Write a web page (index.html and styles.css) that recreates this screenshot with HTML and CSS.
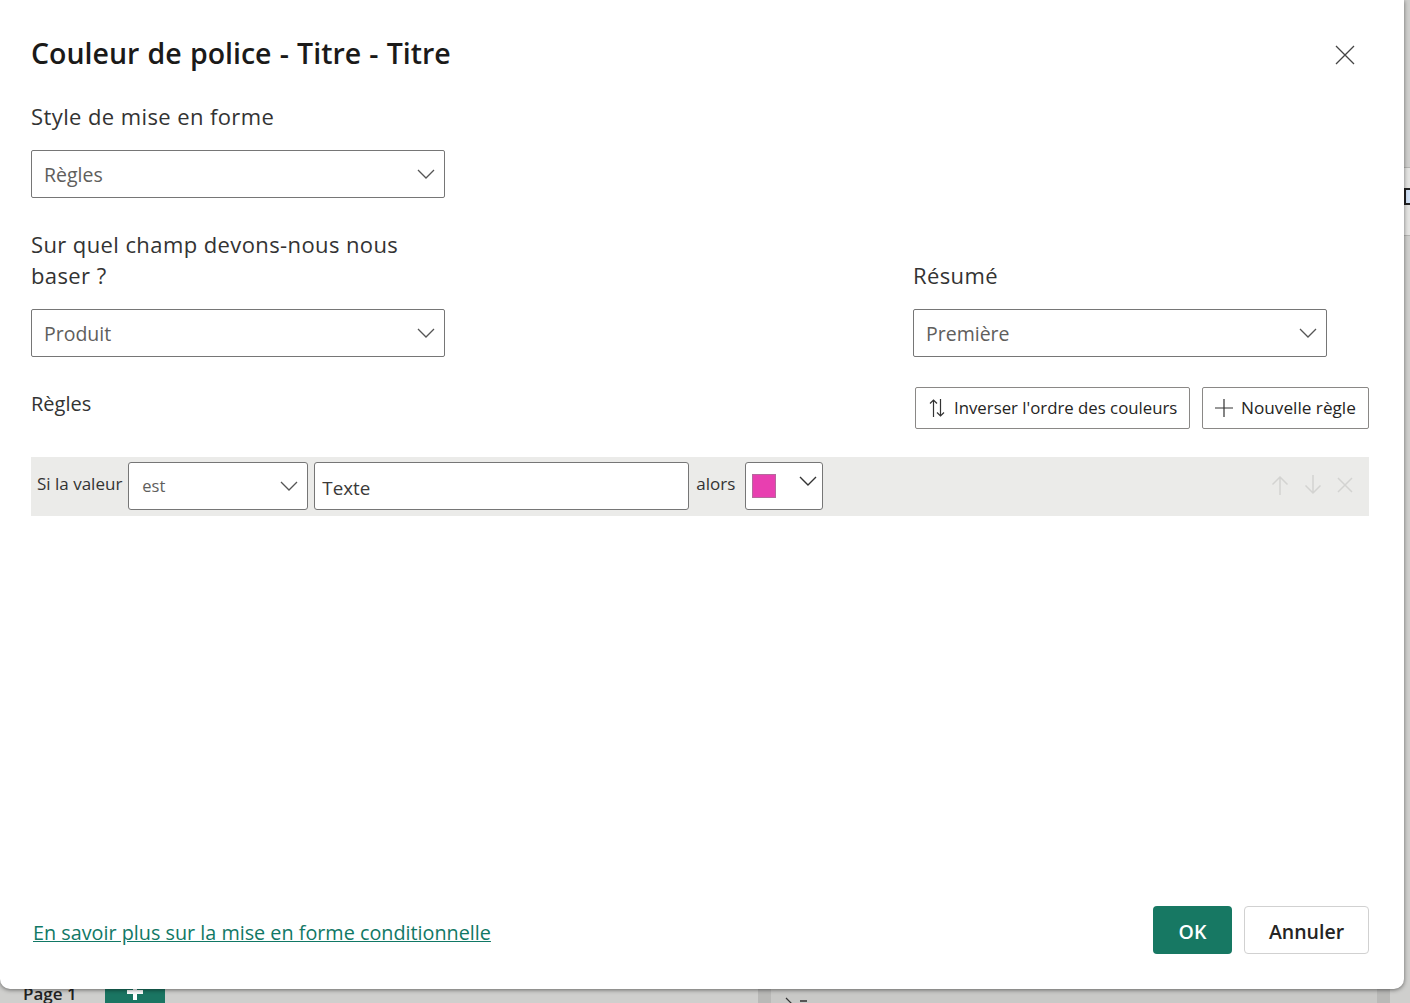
FILE: index.html
```html
<!DOCTYPE html>
<html lang="fr">
<head>
<meta charset="utf-8">
<title>Couleur de police - Titre - Titre</title>
<link rel="stylesheet" href="styles.css">
</head>
<body>
<div class="backdrop">
  <div class="bg-tabs">
    <span class="bg-page">Page 1</span>
    <span class="bg-add"><svg width="16" height="16" viewBox="0 0 16 16"><path d="M8 0v16M0 8h16" stroke="#fff" stroke-width="4"/></svg></span>
  </div>
  <div class="bg-gutter"></div>
  <div class="bg-pane"><svg width="12" height="12" viewBox="0 0 12 12"><path d="M3 1l5 5-5 5" fill="none" stroke="#333" stroke-width="1.2"/></svg><span class="bg-mark"></span></div>
  <div class="bg-pane-end"></div>
  <div class="bg-side"><span class="bg-box"></span></div>
</div>
<main class="modal">
  <header class="modal-head">
    <h1 class="title">Couleur de police - Titre - Titre</h1>
    <svg class="close" width="20" height="20" viewBox="0 0 20 20"><path d="M1 1l18 18M19 1L1 19" stroke="#444" stroke-width="1.3" fill="none"/></svg>
  </header>
  <div class="label first">Style de mise en forme</div>
  <div class="select wide"><span>Règles</span><svg class="chev" width="18" height="10" viewBox="0 0 18 10"><path d="M1 1l8 8 8-8" fill="none" stroke="#555" stroke-width="1.3"/></svg></div>
  <div class="fields">
    <div class="field">
      <div class="label two-line">Sur quel champ devons-nous nous baser ?</div>
      <div class="select wide"><span>Produit</span><svg class="chev" width="18" height="10" viewBox="0 0 18 10"><path d="M1 1l8 8 8-8" fill="none" stroke="#555" stroke-width="1.3"/></svg></div>
    </div>
    <div class="field">
      <div class="label">Résumé</div>
      <div class="select wide"><span>Première</span><svg class="chev" width="18" height="10" viewBox="0 0 18 10"><path d="M1 1l8 8 8-8" fill="none" stroke="#555" stroke-width="1.3"/></svg></div>
    </div>
  </div>
  <div class="rules-head">
    <div class="rules-label">Règles</div>
    <div class="actions">
      <button class="btn-line reverse"><svg class="btn-icon" width="16" height="20" viewBox="0 0 16 20"><path d="M4.500 19V2M1 5.500l3.500-3.500L8 5.500M11.500 1v17M8 14.500l3.500 3.500 3.500-3.500" fill="none" stroke="#333" stroke-width="1.200"/></svg><span class="btn-text">Inverser l'ordre des couleurs</span></button>
      <button class="btn-line add"><svg class="btn-icon" width="18" height="18" viewBox="0 0 18 18"><path d="M9 0v18M0 9h18" stroke="#333" stroke-width="1.200"/></svg><span class="btn-text">Nouvelle règle</span></button>
    </div>
  </div>
  <div class="rule">
    <span class="rule-text">Si la valeur</span>
    <div class="select op"><span>est</span><svg class="chev" width="18" height="10" viewBox="0 0 18 10"><path d="M1 1l8 8 8-8" fill="none" stroke="#555" stroke-width="1.300"/></svg></div>
    <div class="input">Texte</div>
    <span class="rule-text then">alors</span>
    <div class="color"><span class="swatch"></span><svg class="chev-c" width="18" height="10" viewBox="0 0 18 10"><path d="M1 1l8 8 8-8" fill="none" stroke="#333" stroke-width="1.400"/></svg></div>
    <div class="rule-tools">
      <svg width="18" height="20" viewBox="0 0 18 20"><path d="M9 20V2M1.500 9.500L9 2l7.500 7.500" fill="none" stroke="#d3d3d1" stroke-width="1.500"/></svg>
      <svg width="18" height="20" viewBox="0 0 18 20"><path d="M9 0v18M1.500 10.500L9 18l7.500-7.500" fill="none" stroke="#d3d3d1" stroke-width="1.500"/></svg>
      <svg width="16" height="16" viewBox="0 0 16 16"><path d="M1 1l14 14M15 1L1 15" fill="none" stroke="#d3d3d1" stroke-width="1.500"/></svg>
    </div>
  </div>
  <footer class="modal-foot">
    <a class="learn" href="#">En savoir plus sur la mise en forme conditionnelle</a>
    <div class="foot-btns">
      <button class="ok">OK</button>
      <button class="cancel">Annuler</button>
    </div>
  </footer>
</main>
</body>
</html>
```
FILE: styles.css
```css
* { box-sizing: border-box; }
html, body { margin: 0; height: 100%; overflow: hidden; }
body { font-family: "Open Sans", "Noto Sans", sans-serif; color: #252423; background: #d2d2d0; position: relative; width: 1410px; height: 1003px; }
.backdrop { position: absolute; inset: 0; background: #cfcfcd; }
.bg-tabs { position: absolute; left: 23px; top: 983px; display: flex; gap: 29px; }
.bg-page { font: 600 17px/22px "Open Sans", sans-serif; color: #222; width: 53px; white-space: nowrap; }
.bg-add { width: 60px; height: 30px; background: #1a7562; display: flex; justify-content: center; padding-top: 1px; }
.bg-gutter { position: absolute; left: 758px; top: 985px; width: 13px; height: 18px; background: #b9b9b7; }
.bg-pane { position: absolute; left: 771px; top: 985px; width: 606px; height: 18px; background: #c9c9c7; padding: 12px 0 0 12px; display: flex; gap: 5px; }
.bg-mark { width: 7px; height: 2px; margin-top: 3px; background: #555; }
.bg-pane-end { position: absolute; left: 1377px; top: 985px; width: 13px; height: 18px; background: #b9b9b7; }
.bg-side { position: absolute; left: 1404px; top: 167px; width: 6px; height: 69px; border-top: 1px solid #b5b5b3; border-bottom: 1px solid #b5b5b3; background: #e4e4e2; padding-top: 20px; }
.bg-box { display: block; width: 6px; height: 17px; background: #cfe0f5; border: 2px solid #222; border-right: 0; }

.modal { position: absolute; left: 0; top: 0; width: 1404px; height: 989px; background: #fff; border-radius: 0 0 10px 10px; box-shadow: 0 1px 4px rgba(0,0,0,.5); padding: 0 35px 0 31px; display: flex; flex-direction: column; }
.modal-head { display: flex; justify-content: space-between; align-items: center; height: 96px; padding: 12px 14px 0 0; }
.title { margin: -3px 0 0; font-size: 28.500px; font-weight: 600; word-spacing: .8px; color: #1b1a19; line-height: 36px; white-space: nowrap; }
.close { margin-top: 1px; }
.label { font-size: 22px; letter-spacing: .4px; line-height: 31px; color: #333; }
.label.first { height: 54px; padding-top: 5px; }
.two-line { width: 414px; }
.select { display: flex; align-items: center; justify-content: space-between; border: 1px solid #767676; border-radius: 2px; background: #fff; color: #605e5c; }
.wide { width: 414px; height: 48px; font-size: 19.500px; padding: 0 9px 0 12px; }
.chev { display: block; }
.fields { display: grid; grid-template-columns: 414px 414px; column-gap: 468px; margin-top: 31px; height: 128px; }
.field { display: flex; flex-direction: column; justify-content: flex-end; }
.field .label { margin-bottom: 18px; }
.rules-head { display: flex; justify-content: space-between; margin-top: 30px; height: 42px; }
.rules-label { font-size: 20px; line-height: 34px; color: #333; }
.actions { display: flex; gap: 12px; }
.btn-line { font-family: inherit; font-size: 17px; color: #252423; background: #fff; border: 1px solid #8a8886; border-radius: 2px; height: 42px; display: flex; align-items: center; white-space: nowrap; padding: 0; }
.btn-icon { flex: none; }
.btn-text { margin-top: -2px; }
.reverse { width: 275px; padding-left: 13px; gap: 9px; font-size: 16.800px; }
.add { width: 167px; padding-left: 12px; gap: 8px; font-size: 17.200px; }
.rule { margin-top: 28px; height: 59px; background: #ebebe9; display: flex; align-items: flex-start; padding: 5px 16px 0 6px; }
.rule-text { font-size: 17px; color: #333; white-space: nowrap; line-height: 24px; margin-top: 10px; }
.op { width: 180px; height: 48px; margin-left: 6px; font-size: 16.500px; padding: 0 9px 0 13px; border-radius: 3px; flex: none; }
.op span { margin-top: -1px; }
.input { width: 375px; height: 48px; margin-left: 6px; border: 1px solid #767676; border-radius: 3px; background: #fff; font-size: 18.800px; color: #3b3a39; padding: 10px 0 0 7px; line-height: 30px; flex: none; }
.then { margin-left: 7px; width: 49px; }
.color { width: 78px; height: 48px; border: 1px solid #767676; border-radius: 3px; background: #fff; display: flex; justify-content: space-between; padding: 11px 5px 0 6px; flex: none; }
.swatch { width: 24px; height: 24px; background: #e83fb0; border: 1px solid #b56a9c; }
.chev-c { margin-top: 2px; }
.rule-tools { margin-left: auto; display: flex; align-items: center; gap: 15px; height: 46px; }
.modal-foot { margin-top: auto; height: 83px; display: flex; justify-content: space-between; align-items: flex-start; padding-left: 2px; }
.learn { font-size: 19.800px; line-height: 54px; color: #117865; text-decoration: underline; white-space: nowrap; }
.foot-btns { display: flex; gap: 12px; }
.ok, .cancel { font-family: inherit; font-size: 19.500px; font-weight: 600; height: 48px; border-radius: 4px; padding: 2px 0 0; }
.ok { width: 79px; background: #177863; color: #fff; border: 0; }
.cancel { width: 125px; background: #fff; color: #252423; border: 1px solid #d1d1d1; }
```
